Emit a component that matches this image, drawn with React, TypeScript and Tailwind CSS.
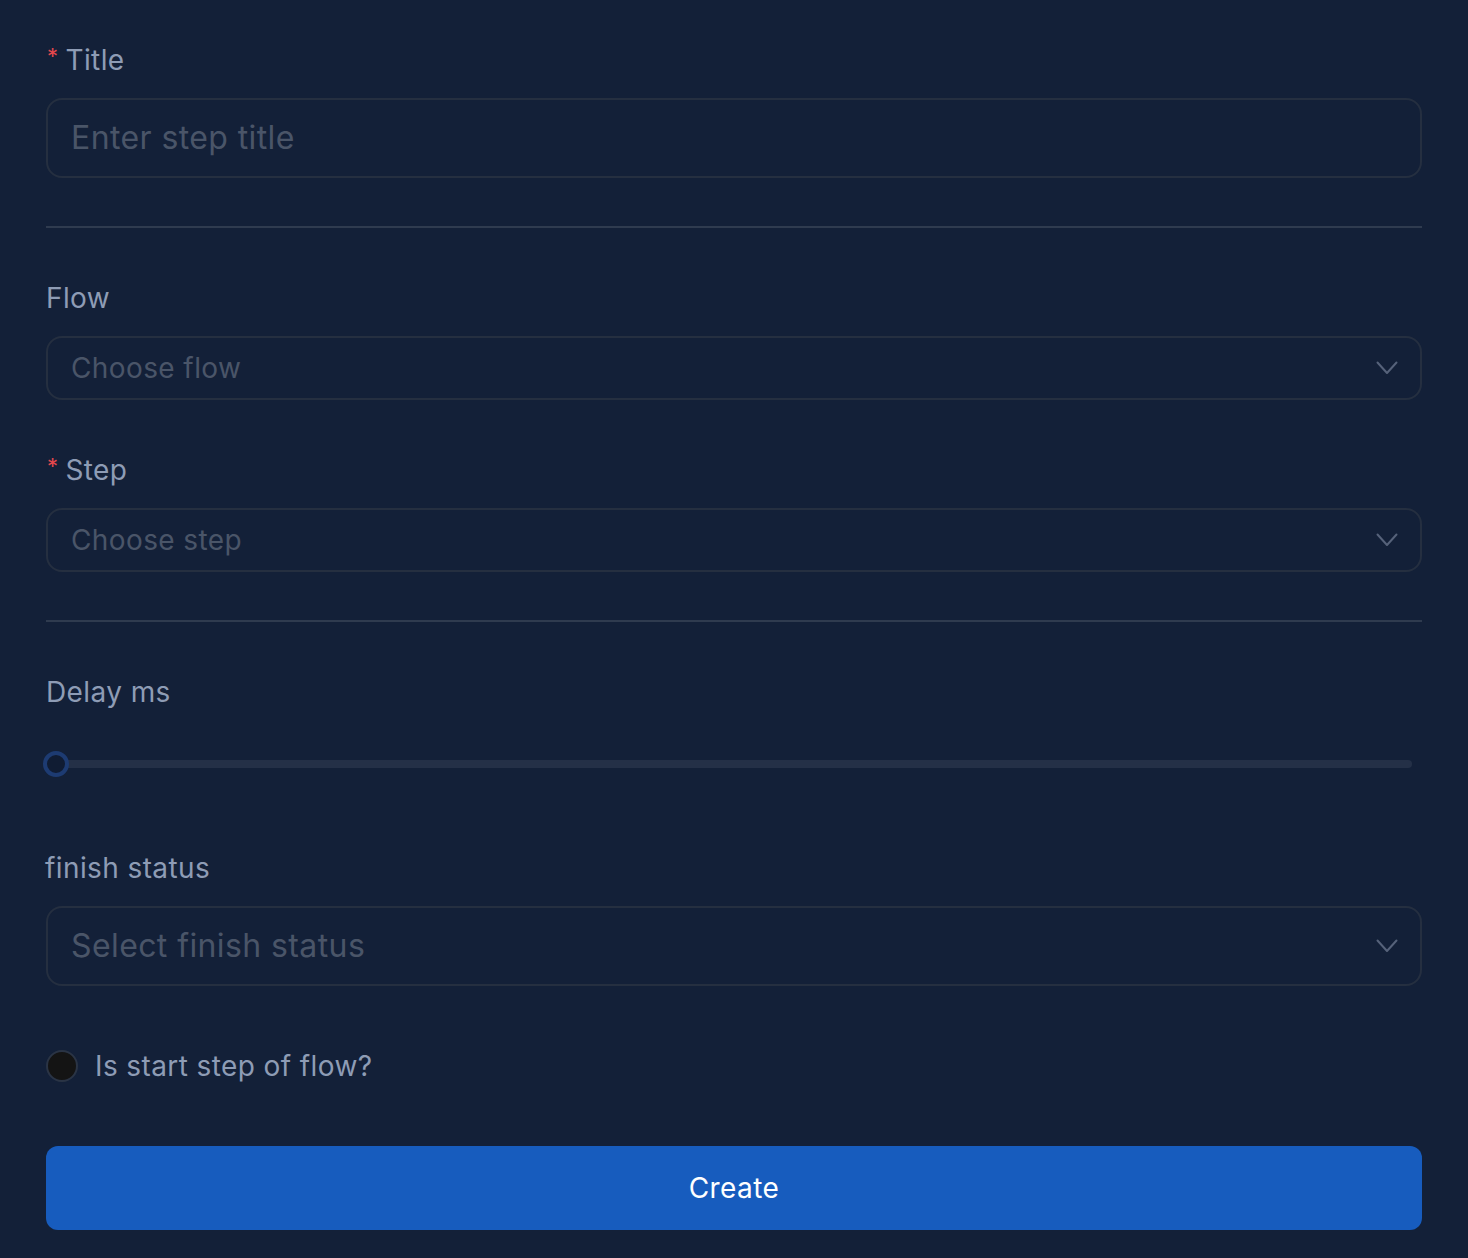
const font = { fontFamily: "Inter, 'Noto Sans', sans-serif", letterSpacing: "0.025em" };

const Chevron = () => (
  <svg width="22" height="14" viewBox="0 0 22 14" fill="none" className="text-[#56627a]">
    <path d="M1.5 1.5 L11 12 L20.5 1.5" stroke="currentColor" strokeWidth="2" strokeLinecap="round" strokeLinejoin="round" />
  </svg>
);

const Label = ({ text, required }: { text: string; required?: boolean }) => (
  <div className="flex h-10 items-center text-[28px] text-[#8e9cb5]">
    {required && (
      <span className="mr-[7px] ml-px -mt-2 text-[22px] text-[#e5484d]">*</span>
    )}
    <span>{text}</span>
  </div>
);

const SelectBox = ({ placeholder, big }: { placeholder: string; big?: boolean }) => (
  <div
    className={`flex items-center justify-between rounded-2xl border-2 border-[#252f40] pl-[23px] pr-[22px] ${
      big ? "h-20 text-[32px]" : "h-16 text-[28px]"
    }`}
  >
    <span className="text-[#4a5568]">{placeholder}</span>
    <Chevron />
  </div>
);

const App = () => {
  return (
    <div style={font} className="min-h-[1258px] bg-[#132038] px-[46px] pt-10 pb-7">
      <Label text="Title" required />
      <div className="mt-[18px] flex h-20 items-center rounded-2xl border-2 border-[#252f40] pl-[23px] text-[32px] text-[#4a5568]">
        Enter step title
      </div>
      <div className="mt-12 h-[2px] bg-[#2f3b4f]" />

      <div className="mt-[50px]">
        <Label text="Flow" />
      </div>
      <div className="mt-[18px]">
        <SelectBox placeholder="Choose flow" />
      </div>

      <div className="mt-[50px]">
        <Label text="Step" required />
      </div>
      <div className="mt-[18px]">
        <SelectBox placeholder="Choose step" />
      </div>
      <div className="mt-12 h-[2px] bg-[#2f3b4f]" />

      <div className="mt-[50px]">
        <Label text="Delay ms" />
      </div>
      <div className="mt-8 flex h-10 items-center pr-[10px]">
        <div className="relative h-2 w-full rounded-full bg-[#243047]">
          <div className="absolute top-1/2 -left-[3px] h-[26px] w-[26px] -translate-y-1/2 rounded-full border-4 border-[#1d3b72] bg-[#101c33]" />
        </div>
      </div>

      <div className="mt-16 -ml-px">
        <Label text="finish status" />
      </div>
      <div className="mt-[18px]">
        <SelectBox placeholder="Select finish status" big />
      </div>

      <div className="mt-[60px] flex h-10 items-center gap-[17px]">
        <div className="h-8 w-8 rounded-full border-2 border-[#2a3445] bg-[#141414]" />
        <span className="text-[28px] text-[#8e9cb5]">Is start step of flow?</span>
      </div>

      <button className="mt-[60px] flex h-[84px] w-full items-center justify-center rounded-xl bg-[#175cbe] text-[28px] text-white">
        Create
      </button>
    </div>
  );
};

export default App;
